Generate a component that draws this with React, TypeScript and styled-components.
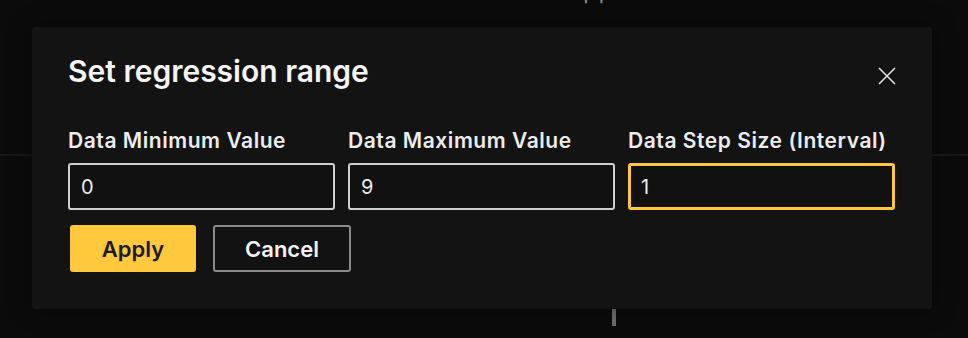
import React from "react";
import styled, { createGlobalStyle } from "styled-components";

const Global = createGlobalStyle`
  html, body { margin: 0; padding: 0; background: #0b0b0b; }
  body { font-family: Inter, "Noto Sans", sans-serif; overflow: hidden; }
  * { box-sizing: border-box; }
`;

const Page = styled.div`
  position: relative;
  width: 968px;
  height: 338px;
  background: #0b0b0b;
  overflow: hidden;
`;

const Backdrop = styled.div`
  position: absolute;
  inset: 0;
  pointer-events: none;
`;

const FaintText = styled.div`
  position: absolute;
  left: 566px;
  top: -22px;
  font-size: 22px;
  line-height: 26px;
  color: #8a8a8a;
  letter-spacing: 2px;
`;

const GridLine = styled.div`
  position: absolute;
  left: 0;
  right: 0;
  top: 154px;
  height: 2px;
  background: #191919;
`;

const Tick = styled.div`
  position: absolute;
  left: 612px;
  top: 309px;
  width: 4px;
  height: 17px;
  background: #6e6e6e;
`;

const Dialog = styled.div`
  position: absolute;
  left: 32px;
  top: 27px;
  width: 900px;
  height: 282px;
  background: #131313;
  border-radius: 3px;
  padding: 26px 36px 0 36px;
  box-shadow: 0 0 24px rgba(0, 0, 0, 0.4);
`;

const Header = styled.div`
  display: flex;
  align-items: flex-start;
  justify-content: space-between;
  height: 36px;
`;

const Title = styled.h2`
  margin: 0;
  font-size: 30px;
  line-height: 36px;
  font-weight: 600;
  color: #f4f4f4;
  letter-spacing: 0px;
`;

const CloseButton = styled.button`
  background: none;
  border: none;
  padding: 0;
  margin-top: 14px;
  width: 18px;
  height: 18px;
  display: flex;
  align-items: center;
  justify-content: center;
  cursor: pointer;
`;

const Fields = styled.div`
  display: grid;
  grid-template-columns: repeat(3, 267px);
  column-gap: 13px;
  margin-top: 39px;
`;

const Field = styled.div`
  display: flex;
  flex-direction: column;
  gap: 9px;
`;

const Label = styled.label`
  font-size: 21px;
  font-weight: 600;
  color: #ececec;
  line-height: 26px;
  letter-spacing: 0.55px;
  white-space: nowrap;
`;

const Input = styled.input<{ $focused?: boolean }>`
  width: 267px;
  height: 47px;
  background: #111111;
  border: 2px solid ${(p) => (p.$focused ? "#ffc83a" : "#cfcfcf")};
  box-shadow: ${(p) => (p.$focused ? "inset 0 0 0 1px #ffc83a" : "none")};
  border-radius: 3px;
  padding: 0 11px;
  color: #ececec;
  font-family: Inter, "Noto Sans", sans-serif;
  font-size: 20px;
  outline: none;
`;

const Actions = styled.div`
  display: flex;
  gap: 17px;
  margin-top: 15px;
  padding-left: 2px;
`;

const Button = styled.button<{ $primary?: boolean }>`
  height: 47px;
  border-radius: 3px;
  font-family: Inter, "Noto Sans", sans-serif;
  font-size: 22px;
  font-weight: 600;
  cursor: pointer;
  ${(p) =>
    p.$primary
      ? `width: 126px; background: #ffc83d; color: #1b1b1b; border: none;`
      : `width: 138px; background: #121212; color: #f2f2f2; border: 2px solid #8a8a8a;`}
`;

export default function App() {
  return (
    <Page>
      <Global />
      <Backdrop>
        <FaintText>Appearance</FaintText>
        <GridLine />
        <Tick />
      </Backdrop>
      <Dialog>
        <Header>
          <Title>Set regression range</Title>
          <CloseButton aria-label="Close">
            <svg width="18" height="18" viewBox="0 0 18 18">
              <path d="M1 1 L17 17 M17 1 L1 17" stroke="#e0e0e0" strokeWidth="1.6" />
            </svg>
          </CloseButton>
        </Header>
        <Fields>
          <Field>
            <Label>Data Minimum Value</Label>
            <Input defaultValue="0" />
          </Field>
          <Field>
            <Label>Data Maximum Value</Label>
            <Input defaultValue="9" />
          </Field>
          <Field>
            <Label>Data Step Size (Interval)</Label>
            <Input defaultValue="1" $focused />
          </Field>
        </Fields>
        <Actions>
          <Button $primary>Apply</Button>
          <Button>Cancel</Button>
        </Actions>
      </Dialog>
    </Page>
  );
}
